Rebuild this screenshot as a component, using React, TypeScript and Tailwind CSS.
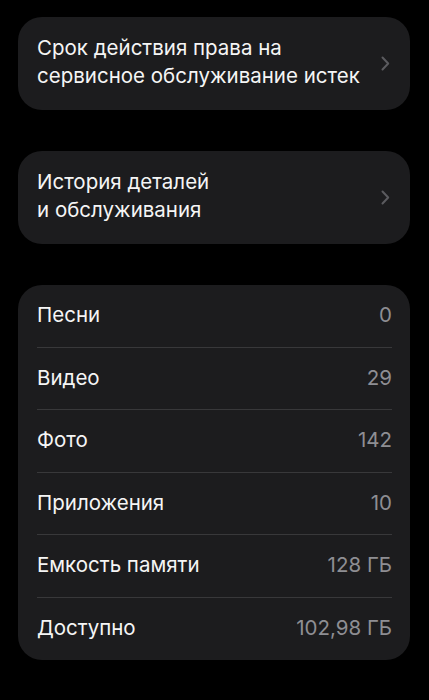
const rows = [
  { label: 'Песни', value: '0' },
  { label: 'Видео', value: '29' },
  { label: 'Фото', value: '142' },
  { label: 'Приложения', value: '10' },
  { label: 'Емкость памяти', value: '128 ГБ' },
  { label: 'Доступно', value: '102,98 ГБ' },
];

function Chevron() {
  return (
    <svg width="9" height="15" viewBox="0 0 9 15" fill="none" className="shrink-0">
      <path d="M1.5 1.5L7.2 7.5L1.5 13.5" stroke="#5b5b5f" strokeWidth="2" strokeLinecap="round" strokeLinejoin="round" />
    </svg>
  );
}

function LinkCard({ lines }: { lines: string[] }) {
  return (
    <div className="flex h-[93px] items-center justify-between rounded-[24px] bg-[#1c1c1e] pl-[19px] pr-[20px]">
      <div className="-mt-[3px] text-[20.5px] leading-[28px] text-[#f5f5f5]">
        {lines.map((l) => (
          <div key={l}>{l}</div>
        ))}
      </div>
      <Chevron />
    </div>
  );
}

export default function App() {
  return (
    <div
      className="min-h-[700px] bg-black pb-10 pl-[18px] pr-[19px] pt-[17px]"
      style={{ fontFamily: 'Inter, "Noto Sans", sans-serif' }}
    >
      <LinkCard lines={['Срок действия права на', 'сервисное обслуживание истек']} />
      <div className="h-[41px]" />
      <LinkCard lines={['История деталей', 'и обслуживания']} />
      <div className="h-[41px]" />
      <div className="rounded-[24px] bg-[#1c1c1e] pl-[19px] pr-[18px]">
        {rows.map((r, i) => (
          <div
            key={r.label}
            className={`flex h-[62.5px] items-center justify-between text-[20.5px] ${i < rows.length - 1 ? 'border-b border-[#38383a]' : ''}`}
          >
            <span className="text-[#f5f5f5]">{r.label}</span>
            <span className="text-[#8e8e93]">{r.value}</span>
          </div>
        ))}
      </div>
    </div>
  );
}
